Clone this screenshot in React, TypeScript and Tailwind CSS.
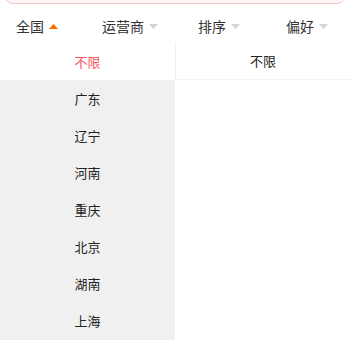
const font = { fontFamily: '"Noto Sans CJK SC", "Liberation Sans", sans-serif' };

const tabs = [
  { label: "全国", active: true, cls: "" },
  { label: "运营商", active: false, cls: "-ml-[2px]" },
  { label: "排序", active: false, cls: "-ml-[6px]" },
  { label: "偏好", active: false, cls: "" },
];

const provinces = ["不限", "广东", "辽宁", "河南", "重庆", "北京", "湖南", "上海"];

function Caret({ active }: { active: boolean }) {
  return (
    <svg width="9" height="5" viewBox="0 0 9 5" className="ml-[5px]">
      <path d="M0 5 L4.5 0 L9 5 Z" fill={active ? "#ff6a00" : "#d4d4d4"} transform={active ? "" : "rotate(180 4.5 2.5)"} />
    </svg>
  );
}

export default function App() {
  return (
    <div className="w-[350px] h-[340px] bg-white overflow-hidden" style={font}>
      <div className="h-[4px] overflow-hidden px-[5px]">
        <div className="h-[30px] -mt-[26px] rounded-lg border border-[#f1c3c3] bg-[#fff6f6]" />
      </div>

      <div className="h-[39px] pt-[6px] flex items-center justify-between pl-4 pr-[22px]">
        {tabs.map((t) => (
          <div key={t.label} className={`flex items-center text-[14px] text-[#333] ${t.cls}`}>
            <span>{t.label}</span>
            <Caret active={t.active} />
          </div>
        ))}
      </div>

      <div className="flex">
        <div className="w-[175px] bg-[#f0f0f0] h-[300px]">
          {provinces.map((p, i) => (
            <div
              key={p}
              className={`h-[37px] flex items-center justify-center text-[13px] ${
                i === 0 ? "bg-white text-[#ff4f5a]" : "text-[#222]"
              }`}
            >
              {p}
            </div>
          ))}
        </div>
        <div className="flex-1">
          <div className="h-[37px] flex items-center justify-center text-[13px] text-[#222] border-l border-b border-[#f2f2f2]">
            不限
          </div>
        </div>
      </div>
    </div>
  );
}
